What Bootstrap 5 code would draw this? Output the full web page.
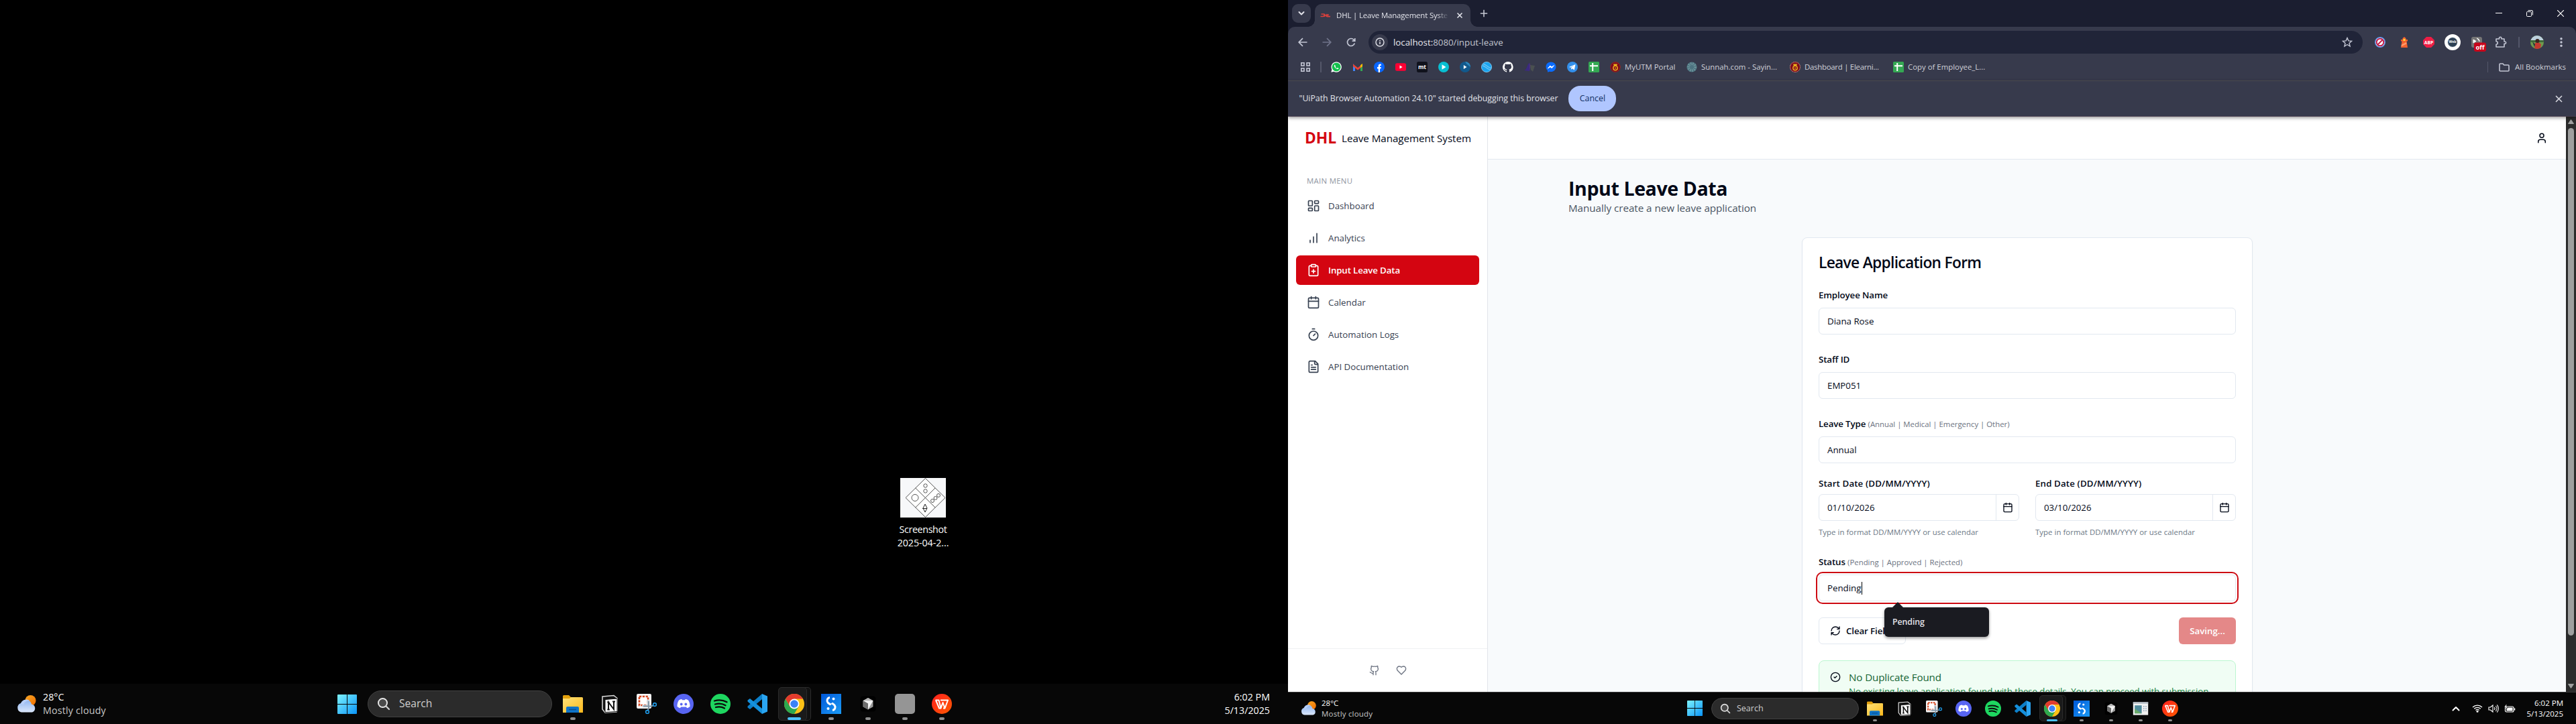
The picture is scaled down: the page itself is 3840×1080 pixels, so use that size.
<!DOCTYPE html>
<html lang="en">
<head>
<meta charset="utf-8">
<title>DHL | Leave Management System</title>
<link href="https://cdn.jsdelivr.net/npm/bootstrap@5.3.0/dist/css/bootstrap.min.css" rel="stylesheet">
<style>
  body{width:3840px;height:1080px;overflow:hidden;background:#000;font-family:"Open Sans","Noto Sans",sans-serif;color:#020817;line-height:1.25}
  svg{display:block;flex:none}
  .monitor{width:1920px;height:1080px;overflow:hidden}
  .ln{fill:none;stroke:currentColor;stroke-width:2;stroke-linecap:round;stroke-linejoin:round}

  /* desktop */
  .desk-item{left:1326px;top:713px;width:100px;color:#fff;font-size:14.25px;line-height:20px}
  .desk-item span{letter-spacing:-.34px}
  .desk-item span+span{letter-spacing:-.06px}

  /* taskbar */
  .taskbar{background:#070707;color:#fff;--sz:30px;--slot:55px;height:60px;flex:none}
  .taskbar.compact{--sz:24px;--slot:44px;height:48px;border-top:1px solid #3a3a3a}
  .weather{width:503px;padding-left:25px;font-size:14.25px;line-height:20px;gap:9px;padding-top:0}
  .compact .weather{width:595px;padding-left:19px;font-size:11.5px;line-height:16px;gap:7px}
  .weather .sub{color:#c8c8c8;letter-spacing:.2px}
  .searchpill{width:275px;height:40px;margin-left:16px;margin-right:3.5px;border-radius:20px;background:#2b2b2b;border:1px solid #424242;padding-left:13px;gap:13px;color:#cfcfcf;font-size:15.6px}
  .compact .searchpill{width:220px;height:32px;margin-left:13px;margin-right:1.5px;padding-left:12px;gap:9px;font-size:12.5px}
  .slot{width:var(--slot);height:100%}
  .slot>svg{width:var(--sz);height:var(--sz)}
  .slot.run::after{content:"";position:absolute;left:50%;top:calc(50% + var(--sz)*.667);width:8px;height:4px;margin-left:-4px;border-radius:2px;background:#8f8f8f}
  .compact .slot.run::after{width:6px;height:3px;margin-left:-3px}
  .slot.run.current::after{width:20px;margin-left:-10px;background:#4cc2ff}
  .compact .slot.run.current::after{width:16px;margin-left:-8px}
  .slot.current::before{content:"";position:absolute;left:3px;top:5px;bottom:5px;right:9px;border-radius:5px;background:#1a1a1a;border:1px solid #2b2b2b;box-shadow:6px 0 0 -1px #111,6px 0 0 0 #2b2b2b}
  .compact .slot.current::before{left:3px;top:4px;bottom:4px;right:6px;box-shadow:5px 0 0 -1px #111,5px 0 0 0 #262626}
  .slot>svg{position:relative}
  .clock{font-size:14.25px;line-height:20px;text-align:right;margin-right:27px}
  .compact .clock{font-size:11.5px;line-height:16px;margin-right:19px}

  /* browser */
  .browser{background:#373a4c;color:#e2e3ea}
  .tabstrip{height:40px;background:#1b1e30}
  .tabmenu{width:28px;height:28px;margin-left:6px;border-radius:9px;background:#373a4c}
  .tabpill{width:232px;height:34px;margin:6px 0 0 6px;border-radius:10px 10px 0 0;background:#373a4c;padding-left:8px}
  .tabpill::before,.tabpill::after{content:"";position:absolute;bottom:0;width:10px;height:10px;background:radial-gradient(circle at 0 0,transparent 9.5px,#373a4c 10px)}
  .tabpill::before{left:-10px}
  .tabpill::after{right:-10px;transform:scaleX(-1)}
  .tabtext{width:168px;margin-left:8px;font-size:11.4px;letter-spacing:-.13px;white-space:nowrap;overflow:hidden;-webkit-mask-image:linear-gradient(90deg,#000 150px,transparent 168px)}
  .winbtn{width:46px}
  .toolwrap{background:#1b1e30}
  .toolrow{height:40px;padding:6px 4px 0;background:#373a4c;border-radius:10px 10px 0 0}
  .tslot{width:36px}
  .omni{width:1482px;height:34px;margin:0 8px;border-radius:17px;background:#202438;padding:0 15px 0 5px}
  .infodot{width:24px;height:24px;background:#373a4c;margin-right:8px}
  .url{font-size:13.3px;color:#e9eaf0}
  .url span{color:#c2c4cf}
  .marks{height:40px;padding-left:10px;font-size:11.4px;color:#cfd0d8;white-space:nowrap}
  .mslot{width:32px}
  .vsep{width:1.5px;height:16px;background:#54576a}
  .mt{margin-left:-2px}
  .infobar{height:54px;border-top:1px solid #4b4a50;border-bottom:1px solid #4a3f50;padding:0 17px 0 16.5px;font-size:12.35px;letter-spacing:-.03px;box-shadow:0 2px 5px rgba(0,0,0,.4);z-index:3}
  .cancelbtn{width:71px;height:38px;margin-left:16px;border-radius:18px;background:#b0c6ff;color:#102f63;font-size:12.4px;font-weight:500;border:0;padding:0}

  /* application */
  .app{height:858px;color:#020817}
  .side{width:298px;border-right:1px solid #e2e5ea;background:#fff}
  .brandrow{height:64px;padding-left:25px}
  .brandrow b{color:#d40511;font-size:22.8px;line-height:1;margin-right:8px;letter-spacing:-.05px}
  .brandrow span{font-size:15.2px;letter-spacing:-.05px}
  .menucap{margin:24px 0 7px 28px;font-size:11.4px;line-height:16px;color:#9096a1;letter-spacing:.3px}
  .side .nav{padding:0 12px;gap:4px}
  .side .nav-link{height:44px;padding:0 16px;gap:12px;font-size:13.3px;color:#374151;border-radius:6px}
  .side .nav-link.active{background:#d40511;color:#fff;font-weight:600;letter-spacing:-.14px}
  .sidefoot{height:65px;border-top:1px solid #f0f1f3;color:#6b7280;gap:24px}
  .topbar{height:64px;background:#fff;border-bottom:1px solid #e2e8f0;padding-right:27px}
  .maincol{background:#f8fafc}
  .content{padding:25px 120px 0}
  .content h1{font-size:28.5px;line-height:36px;font-weight:700;letter-spacing:-.38px;margin:0}
  .content .intro{font-size:15.2px;line-height:24px;color:#4b5563;letter-spacing:-.04px;margin:-1px 0 32px}
  .formcard{width:672px;height:800px;margin-left:348px;padding:24px;border:1px solid #e2e8f0;border-radius:8px;background:#fff;box-shadow:0 1px 2px rgba(0,0,0,.05)}
  .formcard h2{font-size:22.8px;line-height:26px;font-weight:600;letter-spacing:-.71px;margin:0 0 25px}
  .flabel{display:block;height:20px;font-size:13.3px;line-height:20px;font-weight:600;letter-spacing:-.12px;margin-bottom:9px}
  .flabel span{font-size:11.4px;font-weight:400;color:#6b7280;letter-spacing:-.01px}
  .fin{height:40px;border:1px solid #e2e8f0;border-radius:6px;padding:0 12px;font-size:13.3px;background:#fff;color:#020817}
  .fgroup{margin-bottom:27px}
  .fin.focused{outline:2px solid #cc0a12;outline-offset:2px;border-radius:6px}
  .caret{width:1px;height:19px;background:#000}
  .hint{font-size:11.4px;line-height:16px;color:#6b7785;margin-top:9px;letter-spacing:.04px}
  .calbtn{width:34px;border-left:1px solid #e2e8f0}
  .act{height:40px;border-radius:6px;font-size:13.3px;font-weight:600;padding:0 16px;letter-spacing:-.1px}
  .clearbtn{border:1px solid #e2e8f0;width:130px;gap:8px;background:#fff;color:#020817}
  .savebtn{width:85px;background:#e48888;color:#fff;border:0;padding:0;letter-spacing:0}
  .okbox{border:1px solid #bbf7d0;background:#f0fdf4;border-radius:8px;height:110px;margin-top:24px;padding:14px 16px;gap:12px;color:#166534}
  .okbox h3{font-size:15.2px;line-height:20px;font-weight:500;letter-spacing:-.13px;margin:0 0 1px}
  .okbox p{font-size:13.3px;line-height:20px;letter-spacing:-.08px;white-space:nowrap;color:#15803d;margin:0}
  .suggest{left:98px;top:49px;width:156px;height:44px;border-radius:6px;background:#1a1b21;color:#e3e2e9;font-size:12.4px;font-weight:600;letter-spacing:-.1px;padding-left:12px;box-shadow:0 2px 4px rgba(0,0,0,.4);z-index:2}
  .suggest::before{content:"";position:absolute;left:12px;top:-8px;border:8px solid transparent;border-top:0;border-bottom-color:#1a1b21}
  .vscroll{width:15px;background:#2b2b2b;padding:4px 0 5px}
  .thumb{width:9px;height:757px;border-radius:5px;background:#9f9f9f}
</style>
</head>
<body class="d-flex">
<svg width="0" height="0" class="position-absolute">
  <defs>
    <linearGradient id="gw" x1="0" y1="0" x2="1" y2="1"><stop offset="0" stop-color="#7df3ff"/><stop offset="1" stop-color="#0a94f8"/></linearGradient>
    <linearGradient id="gf" x1="0" y1="0" x2="1" y2="1"><stop offset="0" stop-color="#ffe27a"/><stop offset="1" stop-color="#fcb91c"/></linearGradient>
    <linearGradient id="gc" x1="0" y1="0" x2="0" y2="1"><stop offset="0" stop-color="#8fb5f0"/><stop offset="1" stop-color="#dbe7fb"/></linearGradient>
    <linearGradient id="gs" x1="0" y1="0" x2="1" y2="1"><stop offset="0" stop-color="#f9a825"/><stop offset="1" stop-color="#ef6c00"/></linearGradient>
    <linearGradient id="gb" x1="0" y1="0" x2="1" y2="1"><stop offset="0" stop-color="#0057d8"/><stop offset="1" stop-color="#1b9bf5"/></linearGradient>
    <linearGradient id="gr" x1="0" y1="0" x2="1" y2="1"><stop offset="0" stop-color="#ff1f1f"/><stop offset="1" stop-color="#ff5a00"/></linearGradient>
  </defs>
  <symbol id="weather" viewBox="0 0 30 26"><circle cx="20.500" cy="8" r="8" fill="url(#gs)"/><path d="M7 25.500a7 7 0 0 1-1-13.500 8.500 8.500 0 0 1 16 1.500 6.200 6.200 0 0 1 1 12z" fill="url(#gc)"/><path d="M6 13a8.500 8.500 0 0 1 13-5c-5 0-8 3-9 6z" fill="#b9d0f8"/></symbol>
  <symbol id="win" viewBox="0 0 29 29"><path d="M1 0h13v14H0V1a1 1 0 0 1 1-1zM15 0h13a1 1 0 0 1 1 1v13H15zM0 15h14v14H1a1 1 0 0 1-1-1zM15 15h14v13a1 1 0 0 1-1 1H15z" fill="url(#gw)"/></symbol>
  <symbol id="mag" viewBox="0 0 20 20"><circle cx="8.500" cy="8.500" r="6.500" fill="#4a4a4a" stroke="#e6e6e6" stroke-width="2"/><path d="M13.500 13.500L18 18" stroke="#d0d0d0" stroke-width="2.200" stroke-linecap="round"/></symbol>
  <symbol id="folder" viewBox="0 0 30 30"><path d="M0 3.500A1.500 1.500 0 0 1 1.500 2H9l3 3v4H0z" fill="#e2a00c"/><path d="M0 7h10l2-2h16.500A1.500 1.500 0 0 1 30 6.500V28H0z" fill="url(#gf)"/><path d="M5 28v-7a2 2 0 0 1 2-2h15a2 2 0 0 1 2 2v7z" fill="#0f74c8"/><path d="M9 23.500h11" stroke="#0a4f8f" stroke-width="1.500"/></symbol>
  <symbol id="notion" viewBox="0 0 30 30"><path d="M4 4l17-1.500 5 4V25l-1 2-17 1-4-5z" fill="#111" stroke="#ddd" stroke-width="1.500"/><path d="M8 8.500L26 7v19.500L8 27.500z" fill="#fff" stroke="#111" stroke-width="1"/><path d="M13 23.500v-11l8 10.500V11.500M11.300 12.500h3.200M19 11.500h4M11.300 23.500h3.500" stroke="#111" stroke-width="2" fill="none"/></symbol>
  <symbol id="snip" viewBox="0 0 30 30"><rect x="0" y="0" width="22" height="22" rx="2" fill="#f3f3f3"/><rect x="4" y="4" width="13" height="13" fill="#fff" stroke="#d8441c" stroke-width="2.600" stroke-dasharray="3.200 1.600"/><path d="M17 9v9h-9" stroke="#c9d3da" stroke-width="3" fill="none"/><path d="M18 11v11l-2 3M10 18.500h12l3-1.500" stroke="#8296a6" stroke-width="2" fill="none"/><circle cx="16" cy="27" r="2.400" fill="none" stroke="#1f9be8" stroke-width="1.600"/><circle cx="27" cy="16" r="2.400" fill="none" stroke="#1f9be8" stroke-width="1.600"/></symbol>
  <symbol id="discord" viewBox="0 0 30 30"><circle cx="15" cy="15" r="15" fill="#5865f2"/><path d="M8 9.500c2-1.200 3.300-1.500 4.300-1.500l.7 1.200h4l.7-1.200c1 0 2.300.3 4.300 1.500 2 3 2.700 6.500 2.500 9.500-1.500 1.300-3 2-4.500 2.300L19 19.500h-8l-1 1.800C8.500 21 7 20.300 5.500 19 5.300 16 6 12.500 8 9.500z" fill="#fff"/><circle cx="11.700" cy="15.500" r="1.900" fill="#5865f2"/><circle cx="18.300" cy="15.500" r="1.900" fill="#5865f2"/></symbol>
  <symbol id="spotify" viewBox="0 0 30 30"><circle cx="15" cy="15" r="15" fill="#1ed760"/><path d="M6 10.500c6-1.800 13-1.200 18.500 1.700M7 15.500c5-1.400 11-.9 15.500 1.700M8 20c4.500-1.200 9-.8 13 1.500" stroke="#0a0a0a" stroke-width="2.300" stroke-linecap="round" fill="none"/></symbol>
  <symbol id="vscode" viewBox="0 0 30 30"><path d="M22 0l8 3.500v23L22 30z" fill="#2aa5f2"/><path d="M22 0v8L4 23l-3.500-2.500v-2z" fill="#0c7fc9"/><path d="M22 30v-8L4 7 .5 9.500v2z" fill="#1590dc"/></symbol>
  <symbol id="chrome" viewBox="0 0 30 30"><circle cx="15" cy="15" r="15" fill="#fbc116"/><path d="M2 7.500A15 15 0 0 0 15 30l6.500-11.300L15 15 8.500 18.700z" fill="#2da94f"/><path d="M2 7.500L8.500 18.700 15 7.500h13A15 15 0 0 0 2 7.500z" fill="#e33b2e"/><circle cx="15" cy="15" r="7.500" fill="#fff"/><circle cx="15" cy="15" r="5.800" fill="#3b82f6"/></symbol>
  <symbol id="ess" viewBox="0 0 30 30"><rect width="30" height="30" fill="url(#gb)"/><path d="M13 5.500c-4 .5-5 5-3 7.500 1.500 1.800 3.500 2 4.500 3.500M17 24.500c4-.5 5-5 3-7.500-1-1.500-3-2-4-3.500" stroke="#fff" stroke-width="3" fill="none"/><circle cx="18.500" cy="7.500" r="2" fill="#fff"/><circle cx="10.500" cy="22" r="2" fill="#fff"/></symbol>
  <symbol id="cube" viewBox="0 0 30 30"><rect x="3.500" y="3.500" width="23" height="23" rx="4" fill="#000"/><path d="M15 6l7.500 4.300v9L15 23.500l-7.500-4.200v-9z" fill="#9a9a9a"/><path d="M7.500 10.300L15 6l7.500 4.300z" fill="#b8b8b8"/><path d="M7.500 10.300h15L15 23.500v-9z" fill="#f4f4f4"/><path d="M7.500 10.300L15 14.500v9l-7.500-4.200z" fill="#6d6d6d"/></symbol>
  <symbol id="blank" viewBox="0 0 30 30"><rect width="30" height="30" rx="5" fill="#959595"/></symbol>
  <symbol id="panelapp" viewBox="0 0 30 30"><rect x="1" y="3" width="28" height="24" fill="#f2f2f2"/><rect x="1" y="3" width="28" height="3" fill="#b8c0c8"/><rect x="4" y="9" width="13" height="15" fill="#4f8a9c"/><path d="M4 24V15l13 9z" fill="#69a868"/><path d="M20 11h2M20 15h2M20 19h2M24 11h2M24 15h2M24 19h2" stroke="#8aa0b4" stroke-width="2"/></symbol>
  <symbol id="wps" viewBox="0 0 30 30"><circle cx="15" cy="15" r="15" fill="url(#gr)"/><path d="M5.500 9.500h5l3 12 3-8.500 3 8.500 4.500-12H13" stroke="#fff" stroke-width="2" fill="none" stroke-linejoin="round"/><path d="M6 9.500l5 12h2.500M19.500 21.500h-2.500" stroke="#fff" stroke-width="2" fill="none"/></symbol>
  <symbol id="sheet" viewBox="0 0 16 16"><rect width="16" height="16" rx="1.500" fill="#34a853"/><path d="M2 6.200h12M6.200 2v12" stroke="#fff" stroke-width="2"/></symbol>
  <symbol id="crest" viewBox="0 0 16 16"><circle cx="8" cy="8" r="7.700" fill="#7d0a1c"/><circle cx="8" cy="8" r="7.200" fill="none" stroke="#b5552f" stroke-width=".9" stroke-dasharray="1 1"/><path d="M5 3.500h6l-1 3H6z" fill="#e8b21a"/><circle cx="8" cy="9.500" r="3.200" fill="none" stroke="#e8a51a" stroke-width="1.500"/><circle cx="8" cy="9.500" r="1" fill="#e8a51a"/></symbol>
  <symbol id="cal" viewBox="0 0 24 24"><path class="ln" d="M8 2v4M16 2v4M3 10h18"/><rect class="ln" x="3" y="4" width="18" height="18" rx="2"/></symbol>
</svg>

<!-- left monitor -->
<div class="monitor position-relative d-flex flex-column flex-shrink-0">
  <div class="flex-grow-1">
    <div class="desk-item position-absolute d-flex flex-column align-items-center">
      <svg width="68" height="59" viewBox="0 0 68 59" class="mb-2"><rect width="68" height="59" fill="#f7f8fa"/><g fill="#fff" stroke="#555" stroke-width="1"><path d="M37.500.5L67 29.500l-29.500 29L8 29.500z"/><path d="M22.700 15L52 44M52 15L22.700 44" fill="none"/><circle cx="37.500" cy="11.500" r="2.700"/><circle cx="37.500" cy="19.500" r="2.700"/><circle cx="22" cy="29.500" r="5"/><circle cx="48" cy="34" r="2.500"/><circle cx="52.500" cy="30" r="2.500"/><circle cx="57" cy="26" r="2.500"/><path d="M37 39l3 6-3 6-3-6zM33 45.500h7" stroke="#222"/></g></svg>
      <span>Screenshot</span><span>2025-04-2...</span>
    </div>
  </div>
  <div class="taskbar d-flex align-items-center">
    <div class="weather d-flex align-items-center"><svg width="30" height="26"><use href="#weather"/></svg><div><div>28°C</div><div class="sub">Mostly cloudy</div></div></div>
    <svg width="29" height="29"><use href="#win"/></svg>
    <div class="searchpill d-flex align-items-center"><svg width="20" height="20"><use href="#mag"/></svg>Search</div>
    <div class="slot run position-relative d-flex align-items-center justify-content-center"><svg><use href="#folder"/></svg></div>
    <div class="slot d-flex align-items-center justify-content-center"><svg><use href="#notion"/></svg></div>
    <div class="slot d-flex align-items-center justify-content-center"><svg><use href="#snip"/></svg></div>
    <div class="slot d-flex align-items-center justify-content-center"><svg><use href="#discord"/></svg></div>
    <div class="slot d-flex align-items-center justify-content-center"><svg><use href="#spotify"/></svg></div>
    <div class="slot d-flex align-items-center justify-content-center"><svg><use href="#vscode"/></svg></div>
    <div class="slot run current position-relative d-flex align-items-center justify-content-center"><svg><use href="#chrome"/></svg></div>
    <div class="slot run position-relative d-flex align-items-center justify-content-center"><svg><use href="#ess"/></svg></div>
    <div class="slot run position-relative d-flex align-items-center justify-content-center"><svg><use href="#cube"/></svg></div>
    <div class="slot run position-relative d-flex align-items-center justify-content-center"><svg><use href="#blank"/></svg></div>
    <div class="slot run position-relative d-flex align-items-center justify-content-center"><svg><use href="#wps"/></svg></div>
    <div class="clock ms-auto"><div>6:02 PM</div><div>5/13/2025</div></div>
  </div>
</div>

<!-- right monitor -->
<div class="monitor d-flex flex-column flex-shrink-0">
  <div class="browser flex-grow-1 d-flex flex-column">
    <div class="tabstrip d-flex align-items-center">
      <div class="tabmenu d-flex align-items-center justify-content-center"><svg width="10" height="8" viewBox="0 0 10 8"><path class="ln" d="M1.500 2L5 5.500 8.500 2"/></svg></div>
      <div class="tabpill position-relative d-flex align-items-center">
        <svg width="16" height="6" viewBox="0 0 16 6"><path d="M1.500 1h4.200c1.300 0 .7 3.500-1.200 3.500H.5M7 1L6 5M10 1L9 5M6.500 3h3M12 1l-1 3.600h4" stroke="#d8403c" stroke-width="1.700" fill="none"/></svg>
        <div class="tabtext">DHL | Leave Management Syste</div>
        <svg width="10" height="10" viewBox="0 0 10 10" style="margin-left:11px"><path d="M1.500 1.500l7 7M8.500 1.500l-7 7" stroke="#e2e3ea" stroke-width="1.600"/></svg>
      </div>
      <svg width="12" height="12" viewBox="0 0 12 12" style="margin-left:14px"><path d="M6 .8v10.400M.8 6h10.400" stroke="#c5c7d2" stroke-width="1.600"/></svg>
      <div class="ms-auto d-flex text-white">
        <div class="winbtn d-flex justify-content-center align-items-center"><svg width="10" height="10"><path d="M0 4.500h10" stroke="#fff"/></svg></div>
        <div class="winbtn d-flex justify-content-center align-items-center"><svg width="10" height="10"><rect x=".5" y="2.500" width="7" height="7" rx="1" fill="none" stroke="#fff"/><path d="M2.500.5H8A1.500 1.500 0 0 1 9.500 2v5.500" fill="none" stroke="#fff"/></svg></div>
        <div class="winbtn d-flex justify-content-center align-items-center"><svg width="10" height="10"><path d="M0 0l10 10M10 0L0 10" stroke="#fff" stroke-width="1.200"/></svg></div>
      </div>
    </div>
    <div class="toolwrap"><div class="toolrow d-flex align-items-center">
      <div class="tslot d-flex justify-content-center"><svg width="14" height="14" viewBox="0 0 14 14"><path d="M13.500 7H1.500M7 1.200L1.200 7 7 12.800" stroke="#c3c6d4" stroke-width="1.700" fill="none"/></svg></div>
      <div class="tslot d-flex justify-content-center"><svg width="14" height="14" viewBox="0 0 14 14"><path d="M.5 7h12M7 1.200L12.800 7 7 12.800" stroke="#70748a" stroke-width="1.700" fill="none"/></svg></div>
      <div class="tslot d-flex justify-content-center"><svg width="14" height="14" viewBox="0 0 14 14"><path d="M12.300 8.500A5.500 5.500 0 1 1 11 3.200l1.500 1.600M12.800 1v4.200H8.600" stroke="#c3c6d4" stroke-width="1.700" fill="none"/></svg></div>
      <div class="omni d-flex align-items-center">
        <div class="infodot rounded-circle d-flex align-items-center justify-content-center"><svg width="14" height="14" viewBox="0 0 14 14"><circle cx="7" cy="7" r="6" fill="none" stroke="#e2e3ea" stroke-width="1.400"/><path d="M7 6.300V10M7 3.800v1.400" stroke="#e2e3ea" stroke-width="1.500"/></svg></div>
        <div class="url">localhost:<span>8080/input-leave</span></div>
        <svg class="ms-auto" width="16" height="16" viewBox="0 0 16 16"><path d="M8 1.500l1.900 4.400 4.700.4-3.600 3.100 1.100 4.600L8 11.500 3.900 14 5 9.400 1.400 6.300l4.700-.4z" fill="none" stroke="#c3c6d4" stroke-width="1.400"/></svg>
      </div>
      <div class="tslot d-flex justify-content-center"><svg width="16" height="16" viewBox="0 0 16 16"><circle cx="8" cy="8" r="7.300" fill="#fff" stroke="#5a93e8" stroke-width="1.400"/><circle cx="8" cy="8" r="5.300" fill="#fff" stroke="#c21f4a" stroke-width="2"/><path d="M11.500 4.500l-7 7" stroke="#c21f4a" stroke-width="2"/></svg></div>
      <div class="tslot d-flex justify-content-center"><svg width="14" height="16" viewBox="0 0 14 16"><path d="M4.500 2L7 0l2.500 2v2H12v2.500h-1.500l1.500 9.500H2l1.500-9.500H2V4h2.500z" fill="#f4622d"/><rect x="5.500" y="3" width="3" height="3" fill="#ffd93b"/><path d="M3 11.500l7-3.500.5 2.500-8 4z" fill="#ff9a6b"/></svg></div>
      <div class="tslot d-flex justify-content-center"><svg width="17" height="16" viewBox="0 0 17 16"><path d="M5 0h7l5 5v6l-5 5H5l-5-5V5z" fill="#ed1e45"/><text x="8.500" y="10.600" font-size="6.800" font-weight="700" fill="#fff" text-anchor="middle">ABP</text></svg></div>
      <div class="tslot d-flex justify-content-center"><svg width="24" height="24" viewBox="0 0 24 24"><circle cx="12" cy="12" r="12" fill="#fff"/><circle cx="12" cy="12" r="7" fill="#2d4054" stroke="#8fa1b0" stroke-dasharray="1 1"/><text x="12" y="13" font-size="5" font-weight="700" fill="#fff" text-anchor="middle">Web</text></svg></div>
      <div class="tslot position-relative d-flex justify-content-center"><svg width="28" height="24" viewBox="0 0 28 24" overflow="visible"><rect x="6" y="4" width="16" height="16" rx="3" fill="#757575"/><path d="M9 8v5l4-2.500zM14 6a5 5 0 0 1 4 5" stroke="#fff" fill="#fff" stroke-width="1"/><rect x="10" y="12.500" width="18" height="13.500" rx="3" fill="#c8051b"/><text x="19" y="23" font-size="9.500" font-weight="700" fill="#fff" text-anchor="middle">off</text></svg></div>
      <div class="tslot d-flex justify-content-center"><svg width="18" height="18" viewBox="0 0 18 18"><path d="M2 4h4.500V3a1.700 1.700 0 0 1 3.400 0v1H14v4h1a1.700 1.700 0 0 1 0 3.400h-1V16H2v-3.800c3 0 3-4.400 0-4.400z" fill="none" stroke="#c3c6d4" stroke-width="1.600" stroke-linejoin="round"/></svg></div>
      <div class="d-flex justify-content-center" style="width:18px"><div class="vsep"></div></div>
      <div class="tslot d-flex justify-content-center"><svg width="20" height="20" viewBox="0 0 20 20"><clipPath id="av"><circle cx="10" cy="10" r="10"/></clipPath><g clip-path="url(#av)"><rect width="20" height="20" fill="#6f9a4e"/><rect width="20" height="7" fill="#bcd0dd"/><path d="M0 7h20v3H0z" fill="#3f6b3a"/><path d="M6 20l1-9 5-1 4 3-1 7z" fill="#c3392f"/><circle cx="10.500" cy="8" r="3" fill="#3a2620"/><path d="M3 9l4 4-1 4z" fill="#23303c"/></g></svg></div>
      <div class="tslot d-flex justify-content-center"><svg width="4" height="16"><g fill="#c3c6d4"><circle cx="2" cy="2.700" r="1.700"/><circle cx="2" cy="8" r="1.700"/><circle cx="2" cy="13.300" r="1.700"/></g></svg></div>
    </div></div>
    <div class="marks d-flex align-items-center">
      <div class="mslot d-flex justify-content-center"><svg width="14" height="14"><g fill="none" stroke="#c3c6d4" stroke-width="1.600"><rect x=".8" y=".8" width="4.200" height="4.200"/><rect x="9" y=".8" width="4.200" height="4.200"/><rect x=".8" y="9" width="4.200" height="4.200"/><rect x="9" y="9" width="4.200" height="4.200"/></g></svg></div>
      <div class="d-flex justify-content-center" style="width:14px"><div class="vsep"></div></div>
      <div class="mslot d-flex justify-content-center"><svg width="16" height="16"><path d="M.3 15.700l1.100-4A7.700 7.700 0 1 1 4.400 14.700z" fill="#fff"/><circle cx="8.100" cy="7.900" r="6.500" fill="#12c04c"/><path d="M5.500 4.500c-1.500 1.500 0 4 1.500 5.300s3.800 2.200 4.700.3l-1.900-1-1 .9C7.700 9.500 7 8.700 6.500 7.700l.7-1z" fill="#fff"/></svg></div>
      <div class="mslot d-flex justify-content-center"><svg width="16" height="16"><path d="M1 3v11h3V7z" fill="#4285f4"/><path d="M15 3v11h-3V7z" fill="#34a853"/><path d="M1 3.500l7 5.500 7-5.500V7l-7 5.500L1 7z" fill="#ea4335"/><path d="M12 5l3-2v4l-3 2z" fill="#fbbc04"/></svg></div>
      <div class="mslot d-flex justify-content-center"><svg width="16" height="16"><circle cx="8" cy="8" r="8" fill="#0866ff"/><path d="M6.700 16v-5.500H5V8h1.700V6.500c0-2.200 1.200-3.200 4.100-2.800v2.200c-1.500-.1-1.800.1-1.800 1V8h1.800l-.4 2.500H9V16z" fill="#fff"/></svg></div>
      <div class="mslot d-flex justify-content-center"><svg width="16" height="16"><rect y="2.300" width="16" height="11.400" rx="2.500" fill="#ff0033"/><path d="M6.500 5.600v4.800L10.600 8z" fill="#fff"/></svg></div>
      <div class="mslot d-flex justify-content-center"><svg width="16" height="16"><rect width="16" height="16" rx="2.500" fill="#10121c"/><text x="8" y="10.700" font-size="8.500" font-weight="700" fill="#fff" text-anchor="middle">mt</text></svg></div>
      <div class="mslot d-flex justify-content-center"><svg width="16" height="16"><circle cx="8" cy="8" r="8" fill="#08bfd2"/><path d="M5.500 4.300v7.400L11.500 8z" fill="#fff"/></svg></div>
      <div class="mslot d-flex justify-content-center"><svg width="16" height="16"><circle cx="8" cy="8" r="8" fill="#12598c"/><path d="M8 0a8 8 0 0 1 8 8L10 3z" fill="#2b87bd"/><path d="M5.800 5v6L10.500 8z" fill="#fff"/></svg></div>
      <div class="mslot d-flex justify-content-center"><svg width="16" height="16"><circle cx="8" cy="8" r="7.600" fill="#1ba4ef" stroke="#8fd2f7" stroke-width=".8"/><path d="M2 6c4 0 7 6 12 6M3 3.500c4 0 7 6 12 6" stroke="#6cc5f5" stroke-width="1.500" fill="none"/></svg></div>
      <div class="mslot d-flex justify-content-center"><svg width="16" height="16" viewBox="0 0 16 16"><path d="M8 0a8 8 0 0 0-2.500 15.600c.4.100.5-.2.500-.4v-1.500c-2.200.5-2.700-1-2.700-1-.4-.9-.9-1.200-.9-1.200-.7-.5.100-.5.100-.5.800.1 1.200.8 1.200.8.700 1.300 1.900.9 2.300.7.100-.5.300-.9.500-1.100-1.800-.2-3.600-.9-3.600-4 0-.9.300-1.600.8-2.100-.1-.2-.4-1 .1-2.100 0 0 .7-.2 2.200.8a7.600 7.600 0 0 1 4 0c1.500-1 2.200-.8 2.200-.8.4 1.100.2 1.900.1 2.100.5.600.8 1.300.8 2.100 0 3.100-1.900 3.700-3.700 3.900.3.300.6.800.6 1.500v2.200c0 .2.100.5.600.4A8 8 0 0 0 8 0z" fill="#fff"/></svg></div>
      <div class="mslot d-flex justify-content-center"><svg width="16" height="16"><path d="M0 13c5-1 4-10 8-11v12z" fill="#3b2a80"/><path d="M8 2c2 3 1 8 0 12z" fill="#53357c"/><path d="M9 5l7 1-3 9-3-3z" fill="#4a5050"/></svg></div>
      <div class="mslot d-flex justify-content-center"><svg width="16" height="16"><path d="M8 .5c4.400 0 7.500 3.100 7.500 7.200S12.400 15 8 15c-.8 0-1.500-.1-2.200-.3L3 15.700v-2.400A7 7 0 0 1 .5 7.700C.5 3.600 3.600.5 8 .5z" fill="#0a6cff"/><path d="M3.500 10L6.800 6l2.200 2 3.500-2.300L9.300 9.500 7 7.700z" fill="#fff" stroke="#fff"/></svg></div>
      <div class="mslot d-flex justify-content-center"><svg width="16" height="16"><circle cx="8" cy="8" r="8" fill="#3390ec"/><path d="M3 8l9.500-4-1.700 8.500-3-2.200-1.500 1.500-.3-2.700L10 6 5 8.800z" fill="#fff"/></svg></div>
      <div class="mslot d-flex justify-content-center"><svg width="16" height="16"><use href="#sheet"/></svg></div>
      <div class="mslot d-flex justify-content-center"><svg width="16" height="16"><use href="#crest"/></svg></div>
      <div class="mt" style="width:84px">MyUTM Portal</div>
      <div class="mslot d-flex justify-content-center"><svg width="16" height="16"><circle cx="8" cy="8" r="7.600" fill="#4c7380"/><circle cx="8" cy="8" r="5" fill="none" stroke="#6d939a" stroke-width="4" stroke-dasharray="1.500 1.500"/></svg></div>
      <div class="mt" style="width:124px">Sunnah.com - Sayin...</div>
      <div class="mslot d-flex justify-content-center"><svg width="16" height="16"><use href="#crest"/><circle cx="8" cy="8" r="7.600" fill="none" stroke="#e5c9c4" stroke-width=".7" stroke-dasharray="1.500 1"/></svg></div>
      <div class="mt" style="width:124px;letter-spacing:-.26px">Dashboard | Elearni...</div>
      <div class="mslot d-flex justify-content-center"><svg width="16" height="16"><use href="#sheet"/></svg></div>
      <div class="mt">Copy of Employee_L...</div>
      <div class="ms-auto d-flex align-items-center" style="padding-right:15px">
        <div class="vsep" style="margin-right:16px"></div>
        <svg width="16" height="13"><path d="M1 2a1 1 0 0 1 1-1h4l1.700 2H14a1 1 0 0 1 1 1v7a1 1 0 0 1-1 1H2a1 1 0 0 1-1-1z" fill="none" stroke="#c3c6d4" stroke-width="1.600"/></svg>
        <span class="ms-2">All Bookmarks</span>
      </div>
    </div>
    <div class="infobar position-relative d-flex align-items-center">
      <span>"UiPath Browser Automation 24.10" started debugging this browser</span>
      <button class="cancelbtn">Cancel</button>
      <svg class="ms-auto" width="11" height="11" style="margin-right:3px"><path d="M1 1l9 9M10 1l-9 9" stroke="#d3d4dc" stroke-width="1.600"/></svg>
    </div>

    <div class="app d-flex">
      <div class="side d-flex flex-column">
        <div class="brandrow d-flex align-items-center"><b>DHL</b><span>Leave Management System</span></div>
        <div class="menucap">MAIN MENU</div>
        <nav class="nav flex-column">
          <a class="nav-link d-flex align-items-center"><svg width="20" height="20" viewBox="0 0 24 24"><g class="ln"><rect x="3" y="3" width="7" height="9" rx="1"/><rect x="14" y="3" width="7" height="5" rx="1"/><rect x="14" y="12" width="7" height="9" rx="1"/><rect x="3" y="16" width="7" height="5" rx="1"/></g></svg>Dashboard</a>
          <a class="nav-link d-flex align-items-center"><svg width="20" height="20" viewBox="0 0 24 24"><path class="ln" d="M12 20V10M18 20V4M6 20v-4"/></svg>Analytics</a>
          <a class="nav-link active d-flex align-items-center"><svg width="20" height="20" viewBox="0 0 24 24"><g class="ln"><rect x="8" y="2" width="8" height="4" rx="1"/><path d="M16 4h2a2 2 0 0 1 2 2v14a2 2 0 0 1-2 2H6a2 2 0 0 1-2-2V6a2 2 0 0 1 2-2h2M9 14h6M12 17v-6"/></g></svg>Input Leave Data</a>
          <a class="nav-link d-flex align-items-center"><svg width="20" height="20"><use href="#cal"/></svg>Calendar</a>
          <a class="nav-link d-flex align-items-center"><svg width="20" height="20" viewBox="0 0 24 24"><g class="ln"><path d="M10 2h4M12 14l3-3"/><circle cx="12" cy="14" r="8"/></g></svg>Automation Logs</a>
          <a class="nav-link d-flex align-items-center"><svg width="20" height="20" viewBox="0 0 24 24"><path class="ln" d="M15 2H6a2 2 0 0 0-2 2v16a2 2 0 0 0 2 2h12a2 2 0 0 0 2-2V7ZM14 2v4a2 2 0 0 0 2 2h4M10 9H8M16 13H8M16 17H8"/></svg>API Documentation</a>
        </nav>
        <div class="sidefoot mt-auto d-flex align-items-center justify-content-center">
          <svg width="16" height="16" viewBox="0 0 24 24"><path class="ln" d="M15 22v-4a4.800 4.800 0 0 0-1-3.500c3 0 6-2 6-5.500.08-1.250-.27-2.480-1-3.500.28-1.150.28-2.350 0-3.500 0 0-1 0-3 1.500-2.640-.5-5.360-.5-8 0C6 2 5 2 5 2c-.3 1.150-.3 2.350 0 3.500A5.403 5.403 0 0 0 4 9c0 3.500 3 5.500 6 5.500-.39.490-.68 1.050-.85 1.650-.17.600-.22 1.230-.15 1.850v4M9 18c-4.510 2-5-2-7-2"/></svg>
          <svg width="16" height="16" viewBox="0 0 24 24"><path class="ln" d="M19 14c1.490-1.460 3-3.210 3-5.500A5.500 5.500 0 0 0 16.500 3c-1.760 0-3 .5-4.500 2-1.500-1.500-2.740-2-4.500-2A5.500 5.500 0 0 0 2 8.500c0 2.300 1.500 4.050 3 5.500l7 7Z"/></svg>
        </div>
      </div>
      <div class="maincol flex-grow-1 overflow-hidden">
        <div class="topbar d-flex align-items-center justify-content-end"><svg width="18" height="18" viewBox="0 0 24 24"><g class="ln"><path d="M19 21v-2a4 4 0 0 0-4-4H9a4 4 0 0 0-4 4v2"/><circle cx="12" cy="7" r="4"/></g></svg></div>
        <div class="content">
          <h1>Input Leave Data</h1>
          <p class="intro">Manually create a new leave application</p>
          <div class="formcard">
            <h2>Leave Application Form</h2>
            <div class="fgroup"><label class="flabel">Employee Name</label><div class="fin d-flex align-items-center">Diana Rose</div></div>
            <div class="fgroup"><label class="flabel">Staff ID</label><div class="fin d-flex align-items-center">EMP051</div></div>
            <div style="margin-bottom:20px"><label class="flabel">Leave Type <span>(Annual | Medical | Emergency | Other)</span></label><div class="fin d-flex align-items-center">Annual</div></div>
            <div class="d-flex gap-4" style="margin-bottom:26px">
              <div class="flex-fill"><label class="flabel" style="margin-bottom:6px;letter-spacing:.13px">Start Date (DD/MM/YYYY)</label>
                <div class="fin d-flex align-items-stretch pe-0"><span class="flex-grow-1 align-self-center">01/10/2026</span><span class="calbtn d-flex align-items-center justify-content-center"><svg width="16" height="16"><use href="#cal"/></svg></span></div>
                <div class="hint">Type in format DD/MM/YYYY or use calendar</div></div>
              <div class="flex-fill"><label class="flabel" style="margin-bottom:6px;letter-spacing:.13px">End Date (DD/MM/YYYY)</label>
                <div class="fin d-flex align-items-stretch pe-0"><span class="flex-grow-1 align-self-center">03/10/2026</span><span class="calbtn d-flex align-items-center justify-content-center"><svg width="16" height="16"><use href="#cal"/></svg></span></div>
                <div class="hint">Type in format DD/MM/YYYY or use calendar</div></div>
            </div>
            <label class="flabel">Status <span>(Pending | Approved | Rejected)</span></label>
            <div class="position-relative mb-4">
              <div class="fin focused d-flex align-items-center">Pending<span class="caret"></span></div>
              <div class="suggest position-absolute d-flex align-items-center">Pending</div>
            </div>
            <div class="d-flex justify-content-between">
              <button class="act clearbtn d-flex align-items-center text-nowrap"><svg width="16" height="16" viewBox="0 0 24 24"><path class="ln" d="M3 12a9 9 0 0 1 9-9 9.750 9.750 0 0 1 6.740 2.740L21 8M21 3v5h-5M21 12a9 9 0 0 1-9 9 9.750 9.750 0 0 1-6.740-2.740L3 16M8 16H3v5"/></svg>Clear Fields</button>
              <button class="act savebtn">Saving...</button>
            </div>
            <div class="okbox d-flex">
              <svg width="16" height="16" viewBox="0 0 24 24" style="margin-top:2px;color:#020817"><g class="ln"><circle cx="12" cy="12" r="10"/><path d="M9 12l2 2 4-4"/></g></svg>
              <div><h3>No Duplicate Found</h3><p>No existing leave application found with these details. You can proceed with submission.</p></div>
            </div>
          </div>
        </div>
      </div>
      <div class="vscroll d-flex flex-column align-items-center">
        <svg width="9" height="7"><path d="M4.500.5L8.500 6.500h-8z" fill="#9f9f9f" stroke="#9f9f9f" stroke-linejoin="round"/></svg>
        <div class="thumb" style="margin-top:6px"></div>
        <svg width="9" height="7" class="mt-auto"><path d="M4.500 6.500L.5.500h8z" fill="#9f9f9f" stroke="#9f9f9f" stroke-linejoin="round"/></svg>
      </div>
    </div>
  </div>
  <div class="taskbar compact d-flex align-items-center">
    <div class="weather d-flex align-items-center"><svg width="24" height="21"><use href="#weather"/></svg><div><div>28°C</div><div class="sub">Mostly cloudy</div></div></div>
    <svg width="23" height="23"><use href="#win"/></svg>
    <div class="searchpill d-flex align-items-center"><svg width="16" height="16"><use href="#mag"/></svg>Search</div>
    <div class="slot run position-relative d-flex align-items-center justify-content-center"><svg><use href="#folder"/></svg></div>
    <div class="slot d-flex align-items-center justify-content-center"><svg><use href="#notion"/></svg></div>
    <div class="slot d-flex align-items-center justify-content-center"><svg><use href="#snip"/></svg></div>
    <div class="slot d-flex align-items-center justify-content-center"><svg><use href="#discord"/></svg></div>
    <div class="slot d-flex align-items-center justify-content-center"><svg><use href="#spotify"/></svg></div>
    <div class="slot d-flex align-items-center justify-content-center"><svg><use href="#vscode"/></svg></div>
    <div class="slot run current position-relative d-flex align-items-center justify-content-center"><svg><use href="#chrome"/></svg></div>
    <div class="slot run position-relative d-flex align-items-center justify-content-center"><svg><use href="#ess"/></svg></div>
    <div class="slot run position-relative d-flex align-items-center justify-content-center"><svg><use href="#cube"/></svg></div>
    <div class="slot run position-relative d-flex align-items-center justify-content-center"><svg><use href="#panelapp"/></svg></div>
    <div class="slot run position-relative d-flex align-items-center justify-content-center"><svg><use href="#wps"/></svg></div>
    <div class="ms-auto d-flex align-items-center">
      <svg width="12" height="8" style="margin-right:18px"><path class="ln" d="M1.500 6.500L6 2l4.500 4.500"/></svg>
      <svg width="16" height="13" style="margin-right:8px"><path d="M1 5a10 10 0 0 1 14 0M3.200 7.300a7 7 0 0 1 9.600 0M5.400 9.500a4 4 0 0 1 5.200 0" stroke="#fff" stroke-width="1.300" fill="none"/><circle cx="8" cy="11.300" r="1.500" fill="#fff"/></svg>
      <svg width="16" height="14" style="margin-right:8px"><path d="M1 5v4h2.500L7 12V2L3.500 5zM9.200 5a3 3 0 0 1 0 4M11.300 3a6 6 0 0 1 0 8M13.300 1.300a9 9 0 0 1 0 11.400" stroke="#fff" stroke-width="1.100" fill="none"/></svg>
      <svg width="17" height="13" style="margin-right:17px"><rect x="1.500" y="4" width="12.500" height="8" rx="2" fill="none" stroke="#fff" stroke-width="1.200"/><path d="M5.500 5.500h7v5h-9v-3z" fill="#fff"/><path d="M15.500 6.500v3" stroke="#fff" stroke-width="1.500"/><path d="M3.500 0L0 5h2.500L2 8.500 5.500 4H3.300z" fill="#fff" stroke="#070707" stroke-width=".4"/></svg>
      <div class="clock"><div>6:02 PM</div><div>5/13/2025</div></div>
    </div>
  </div>
</div>
<script src="https://cdn.jsdelivr.net/npm/bootstrap@5.3.0/dist/js/bootstrap.bundle.min.js"></script>
</body>
</html>
